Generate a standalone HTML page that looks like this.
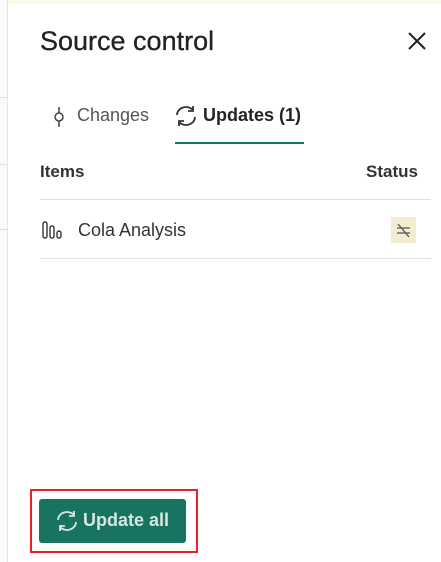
<!DOCTYPE html>
<html><head><style>
body{margin:0;width:441px;height:562px;background:#fff;font-family:"Liberation Sans",sans-serif;position:relative;overflow:hidden;color:#242424}
.a{position:absolute}
</style></head><body>
<div class="a" style="left:0;top:0;width:441px;height:4px;background:#fdfbe8"></div>
<div class="a" style="left:0;top:0;width:7px;height:562px;background:#fafafa;border-right:1px solid #e4e4e4"></div>
<div class="a" style="left:0;top:97px;width:7px;height:1px;background:#ddd"></div>
<div class="a" style="left:0;top:164px;width:7px;height:1px;background:#ddd"></div>
<div class="a" style="left:0;top:229px;width:7px;height:1px;background:#ddd"></div>
<div class="a" style="left:40px;top:26px;font-size:27px;color:#222;-webkit-text-stroke:0.3px #222">Source control</div>
<svg class="a" style="left:407px;top:31px" width="20" height="20"><path d="M2 2L18 18M18 2L2 18" stroke="#222" stroke-width="2"/></svg>
<svg class="a" style="left:53px;top:105px" width="12" height="24"><circle cx="6" cy="12" r="4" fill="none" stroke="#444" stroke-width="1.5"/><path d="M6 2V8M6 16V22" stroke="#444" stroke-width="1.5"/></svg>
<div class="a" style="left:77px;top:105px;font-size:18px;color:#555">Changes</div>
<svg class="a" style="left:174px;top:105px" width="24" height="22" viewBox="0 0 24 22"><path d="M3 10A9 8 0 0 1 19 5M21 12A9 8 0 0 1 5 17" fill="none" stroke="#333" stroke-width="1.8"/><path d="M19 1V6H14M5 21V16H10" fill="none" stroke="#333" stroke-width="1.8"/></svg>
<div class="a" style="left:203px;top:105px;font-size:18px;font-weight:bold;color:#242424">Updates (1)</div>
<div class="a" style="left:175px;top:142px;width:129px;height:2px;background:#117865"></div>
<div class="a" style="left:40px;top:162px;font-size:17px;font-weight:bold;color:#333">Items</div>
<div class="a" style="left:366px;top:162px;font-size:17px;font-weight:bold;color:#333">Status</div>
<div class="a" style="left:40px;top:199px;width:391px;height:1px;background:#e0e0e0"></div>
<svg class="a" style="left:42px;top:221px" width="22" height="18"><rect x="1" y="1" width="4" height="16" rx="2" fill="none" stroke="#333" stroke-width="1.4"/><rect x="8" y="5" width="4" height="12" rx="2" fill="none" stroke="#333" stroke-width="1.4"/><rect x="15" y="10" width="4" height="7" rx="2" fill="none" stroke="#333" stroke-width="1.4"/></svg>
<div class="a" style="left:78px;top:220px;font-size:18px;color:#333">Cola Analysis</div>
<div class="a" style="left:391px;top:217px;width:25px;height:26px;background:#f3ecd0"></div>
<svg class="a" style="left:391px;top:217px" width="25" height="26"><path d="M6 11H19M6 16H19M7 7L18 20" stroke="#555" stroke-width="1.3"/></svg>
<div class="a" style="left:40px;top:258px;width:391px;height:1px;background:#e0e0e0"></div>
<div class="a" style="left:30px;top:489px;width:164px;height:60px;border:2px solid #e8202a"></div>
<div class="a" style="left:39px;top:499px;width:147px;height:44px;background:#187460;border-radius:3px"></div>
<svg class="a" style="left:55px;top:510px" width="24" height="22" viewBox="0 0 24 22"><path d="M3 10A9 8 0 0 1 19 5M21 12A9 8 0 0 1 5 17" fill="none" stroke="#d6e6e0" stroke-width="1.8"/><path d="M19 1V6H14M5 21V16H10" fill="none" stroke="#d6e6e0" stroke-width="1.8"/></svg>
<div class="a" style="left:83px;top:510px;font-size:18px;font-weight:bold;color:#d6e6e0">Update all</div>
</body></html>
